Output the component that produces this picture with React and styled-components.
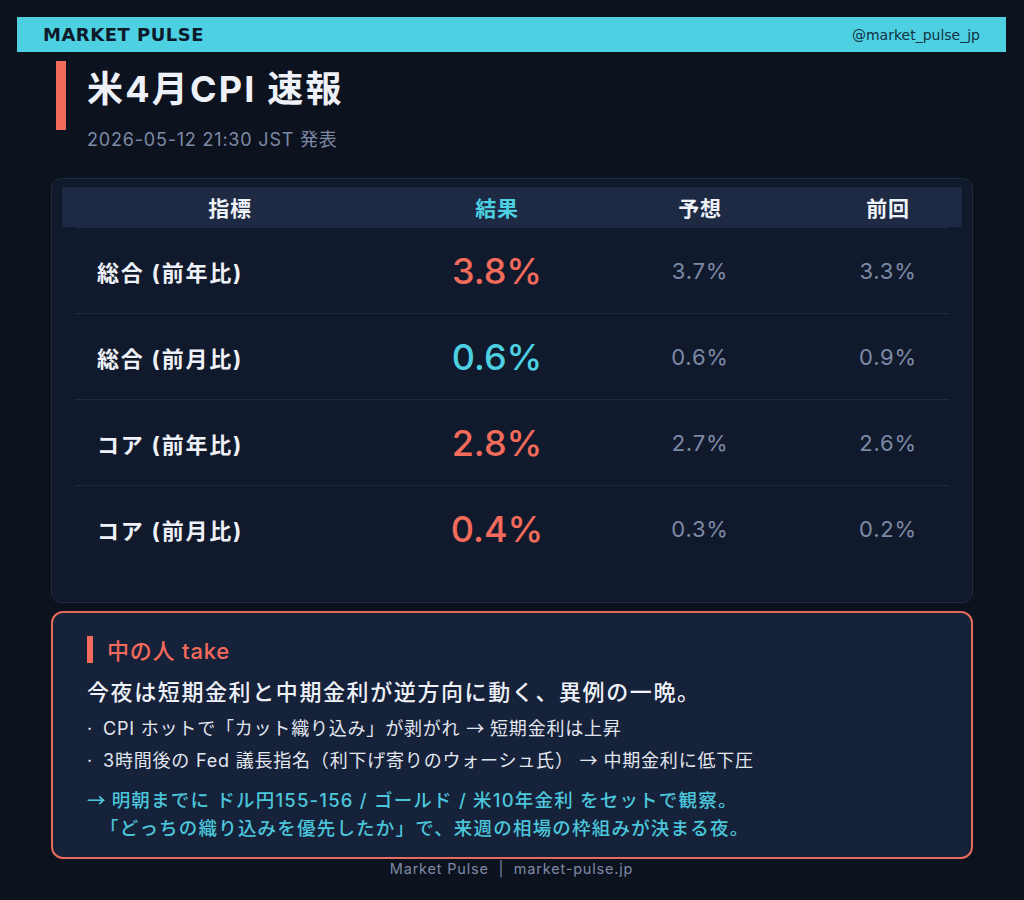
import React from 'react'
import styled, { createGlobalStyle } from 'styled-components'

const GlobalStyle = createGlobalStyle`
  html, body {
    margin: 0;
    padding: 0;
    background: #0d121f;
  }
  body {
    font-family: "Inter", "Noto Sans CJK JP", sans-serif;
    letter-spacing: 0.05em;
    color: #e8edf5;
  }
`

const Page = styled.div`
  width: 1024px;
  height: 900px;
  padding: 17px 18px 0 17px;
  box-sizing: border-box;
  display: flex;
  flex-direction: column;
`

const TopBar = styled.div`
  height: 35px;
  background: #4dd0e1;
  display: flex;
  align-items: center;
  justify-content: space-between;
  padding: 0 26px;
  font-family: "DejaVu Sans", sans-serif;
  letter-spacing: 0;
  color: #0d1a2a;
`

const Brand = styled.div`
  font-weight: 700;
  font-size: 18px;
  letter-spacing: 0.5px;
`

const Handle = styled.div`
  font-size: 14px;
  color: #123044;
`

const TitleBlock = styled.div`
  display: flex;
  gap: 21px;
  margin: 9px 0 0 39px;
`

const Accent = styled.div`
  width: 10px;
  height: 69px;
  background: #f26b5b;
`

const TitleText = styled.div`
  display: flex;
  flex-direction: column;
`

const Title = styled.h1`
  margin: 0;
  font-size: 36px;
  font-weight: 700;
  letter-spacing: 2.2px;
  line-height: 56px;
  color: #eef2f8;
`

const Subtitle = styled.div`
  font-size: 18px;
  line-height: 24px;
  color: #7d8aa6;
  margin-top: 11px;
`

const Card = styled.div`
  margin: 26px 33px 0 34px;
  height: 425px;
  box-sizing: border-box;
  background: #111a2c;
  border: 1px solid #1f2b40;
  border-radius: 10px;
  padding: 8px 10px 0;
`

const HeadRow = styled.div`
  display: grid;
  grid-template-columns: 336px 198px 208px 168px;
  height: 40px;
  align-items: center;
  background: #1e2a44;
  font-size: 21px;
  font-weight: 700;
  text-align: center;
`

const HeadCell = styled.div`
  color: ${p => (p.$accent ? '#4dd0e1' : '#eef2f8')};
`

const Row = styled.div`
  display: grid;
  grid-template-columns: 323px 198px 208px 168px;
  height: 85px;
  align-items: center;
  margin: 0 13px;
  border-top: 1px solid #1e2a3d;
  text-align: center;
  &:first-of-type {
    margin-top: 3px;
  }
`

const Label = styled.div`
  text-align: left;
  padding-left: 22px;
  font-size: 22px;
  letter-spacing: 1.8px;
  font-weight: 700;
  color: #eef2f8;
`

const Big = styled.div`
  font-size: 36px;
  font-weight: 500;
  letter-spacing: 0;
  color: ${p => (p.$tone === 'cool' ? '#4dd0e1' : '#f26b5b')};
`

const Small = styled.div`
  font-size: 22px;
  color: #7d8aa6;
`

const Take = styled.div`
  margin: 8px 33px 0 34px;
  height: 248px;
  box-sizing: border-box;
  background: #16213a;
  border: 2px solid #e56b5d;
  border-radius: 12px;
  padding: 22px 34px 0;
`

const TakeHead = styled.div`
  display: flex;
  align-items: center;
  gap: 14px;
  font-size: 22px;
  font-weight: 500;
  color: #f26b5b;
  height: 28px;
`

const TakeBar = styled.div`
  width: 6px;
  height: 27px;
  background: #f26b5b;
`

const Headline = styled.div`
  margin-top: 14px;
  font-size: 22px;
  letter-spacing: 1.6px;
  font-weight: 500;
  color: #eef2f8;
  line-height: 30px;
`

const Bullets = styled.div`
  margin-top: 5px;
`

const Bullet = styled.div`
  font-size: 18px;
  color: #e2e7f0;
  line-height: 30px;
  &::before {
    content: '·';
    display: inline-block;
    width: 16px;
    letter-spacing: 0;
  }
`

const Arrow = styled.span`
  font-family: "Noto Sans CJK JP", sans-serif;
  letter-spacing: 0;
`

const Watch = styled.div`
  margin-top: 9px;
  font-size: 18.5px;
  letter-spacing: 1.2px;
  font-weight: 500;
  color: #4cc6da;
  line-height: 28px;
`

const WatchLine = styled.div`
  padding-left: ${p => (p.$indent ? '13px' : '0')};
`

const Footer = styled.div`
  text-align: center;
  font-size: 14.5px;
  color: #7d8aa6;
  margin-top: 1px;
  white-space: pre;
`

const rows = [
  { label: '総合 (前年比)', result: '3.8%', tone: 'hot', forecast: '3.7%', prev: '3.3%' },
  { label: '総合 (前月比)', result: '0.6%', tone: 'cool', forecast: '0.6%', prev: '0.9%' },
  { label: 'コア (前年比)', result: '2.8%', tone: 'hot', forecast: '2.7%', prev: '2.6%' },
  { label: 'コア (前月比)', result: '0.4%', tone: 'hot', forecast: '0.3%', prev: '0.2%' }
]

export default function App () {
  return (
    <Page>
      <GlobalStyle />
      <TopBar>
        <Brand>MARKET PULSE</Brand>
        <Handle>@market_pulse_jp</Handle>
      </TopBar>

      <TitleBlock>
        <Accent />
        <TitleText>
          <Title>米4月CPI 速報</Title>
          <Subtitle>2026-05-12 21:30 JST 発表</Subtitle>
        </TitleText>
      </TitleBlock>

      <Card>
        <HeadRow>
          <HeadCell>指標</HeadCell>
          <HeadCell $accent>結果</HeadCell>
          <HeadCell>予想</HeadCell>
          <HeadCell>前回</HeadCell>
        </HeadRow>
        {rows.map(r => (
          <Row key={r.label}>
            <Label>{r.label}</Label>
            <Big $tone={r.tone}>{r.result}</Big>
            <Small>{r.forecast}</Small>
            <Small>{r.prev}</Small>
          </Row>
        ))}
      </Card>

      <Take>
        <TakeHead>
          <TakeBar />
          中の人 take
        </TakeHead>
        <Headline>今夜は短期金利と中期金利が逆方向に動く、異例の一晩。</Headline>
        <Bullets>
          <Bullet>CPI ホットで「カット織り込み」が剥がれ <Arrow>→</Arrow> 短期金利は上昇</Bullet>
          <Bullet>3時間後の Fed 議長指名（利下げ寄りのウォーシュ氏） <Arrow>→</Arrow> 中期金利に低下圧</Bullet>
        </Bullets>
        <Watch>
          <WatchLine><Arrow>→</Arrow> 明朝までに ドル円155-156 / ゴールド / 米10年金利 をセットで観察。</WatchLine>
          <WatchLine $indent>「どっちの織り込みを優先したか」で、来週の相場の枠組みが決まる夜。</WatchLine>
        </Watch>
      </Take>

      <Footer>{'Market Pulse  |  market-pulse.jp'}</Footer>
    </Page>
  )
}
